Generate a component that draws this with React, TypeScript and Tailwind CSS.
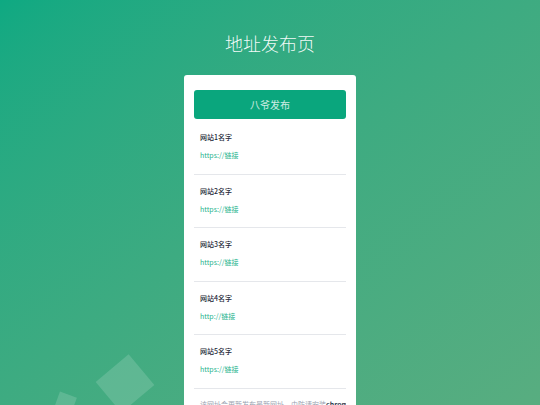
export default function App() {
  const sites = [
    { name: "网站1名字", url: "https://链接" },
    { name: "网站2名字", url: "https://链接" },
    { name: "网站3名字", url: "https://链接" },
    { name: "网站4名字", url: "http://链接" },
    { name: "网站5名字", url: "https://链接" },
  ];

  return (
    <div
      className="relative h-[405px] w-full overflow-hidden bg-gradient-to-br from-[#0ea982] to-[#58ad80]"
      style={{ fontFamily: '"Noto Sans CJK SC", "Noto Sans", sans-serif' }}
    >
      {/* 背景の装飾 */}
      <div className="absolute left-[105px] top-[362px] h-[43px] w-[40px] rotate-[50deg] bg-white/15" />
      <div className="absolute left-[56px] top-[394px] h-[20px] w-[18px] rotate-[20deg] bg-white/15" />

      <div className="relative flex flex-col items-center">
        <h1 className="mt-[30px] text-[18px] font-light leading-[26px] text-white/95">
          地址发布页
        </h1>

        <div className="mt-[19px] w-[172px] rounded-[3px] bg-white px-[10px] pt-[15px]">
          <div className="flex h-[29px] items-center justify-center rounded-[3px] bg-[#0aa67d] text-[10px] text-white/80">
            八爷发布
          </div>

          <ul className="mt-[2px]">
            {sites.map((s) => (
              <li key={s.name} className="border-b border-gray-200 px-[6px] pb-[13.5px] pt-[11px]">
                <div className="text-[7px] font-medium leading-[10px] text-gray-800">{s.name}</div>
                <div className="mt-[8px] text-[7px] leading-[10px] text-[#26b48e]">{s.url}</div>
              </li>
            ))}
          </ul>
          <p className="overflow-hidden whitespace-nowrap px-[6px] pt-[10px] text-[7px] leading-[10px] text-gray-400">
            该网址会更新发布最新网址，由防请安装<b className="text-gray-700">chrome</b>
          </p>
        </div>
      </div>
    </div>
  );
}
